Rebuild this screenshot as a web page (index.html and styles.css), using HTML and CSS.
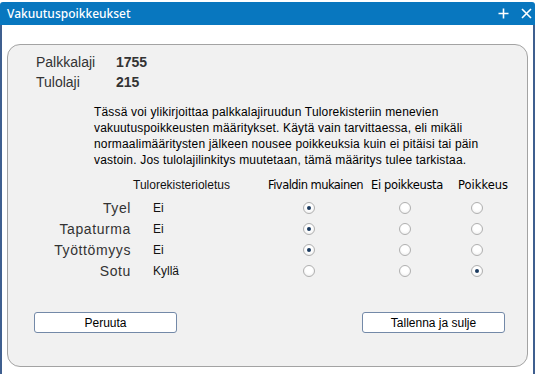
FILE: index.html
```html
<!DOCTYPE html>
<html lang="fi">
<head>
  <meta charset="UTF-8">
  <title>Vakuutuspoikkeukset</title>
  <link rel="stylesheet" href="styles.css">
</head>
<body>
  <div class="window">
    <div class="titlebar">
      <span class="title">Vakuutuspoikkeukset</span>
      <div class="title-buttons">
        <svg width="11" height="11" viewBox="0 0 11 11"><path d="M5.5 0.5v10M0.5 5.5h10" stroke="#fff" stroke-width="1.6" fill="none"/></svg>
        <svg width="11" height="11" viewBox="0 0 11 11"><path d="M1 1l9 9M10 1l-9 9" stroke="#fff" stroke-width="1.6" fill="none"/></svg>
      </div>
    </div>
    <div class="window-body">
      <div class="panel">
        <div class="info">
          <span class="info-label">Palkkalaji</span><span class="info-value">1755</span>
          <span class="info-label">Tulolaji</span><span class="info-value">215</span>
        </div>
        <p class="note">Tässä voi ylikirjoittaa palkkalajiruudun Tulorekisteriin menevien<br>vakuutuspoikkeusten määritykset. Käytä vain tarvittaessa, eli mikäli<br>normaalimääritysten jälkeen nousee poikkeuksia kuin ei pitäisi tai päin<br>vastoin. Jos tulolajilinkitys muutetaan, tämä määritys tulee tarkistaa.</p>
        <div class="exceptions">
          <span></span>
          <span class="head-default">Tulorekisterioletus</span>
          <span class="col-head c3">Fivaldin mukainen</span>
          <span class="col-head c4">Ei poikkeusta</span>
          <span class="col-head c5">Poikkeus</span>

          <span class="row-label">Tyel</span>
          <span class="row-value">Ei</span>
          <span class="cell c3"><input type="radio" name="tyel" checked></span>
          <span class="cell c4"><input type="radio" name="tyel"></span>
          <span class="cell c5"><input type="radio" name="tyel"></span>

          <span class="row-label">Tapaturma</span>
          <span class="row-value">Ei</span>
          <span class="cell c3"><input type="radio" name="tapaturma" checked></span>
          <span class="cell c4"><input type="radio" name="tapaturma"></span>
          <span class="cell c5"><input type="radio" name="tapaturma"></span>

          <span class="row-label">Työttömyys</span>
          <span class="row-value">Ei</span>
          <span class="cell c3"><input type="radio" name="tyottomyys" checked></span>
          <span class="cell c4"><input type="radio" name="tyottomyys"></span>
          <span class="cell c5"><input type="radio" name="tyottomyys"></span>

          <span class="row-label">Sotu</span>
          <span class="row-value">Kyllä</span>
          <span class="cell c3"><input type="radio" name="sotu"></span>
          <span class="cell c4"><input type="radio" name="sotu"></span>
          <span class="cell c5"><input type="radio" name="sotu" checked></span>
        </div>
        <div class="actions">
          <button class="btn">Peruuta</button>
          <button class="btn">Tallenna ja sulje</button>
        </div>
      </div>
    </div>
  </div>
</body>
</html>
```

FILE: styles.css
```css
* { margin: 0; padding: 0; box-sizing: border-box; }
body {
  background: #fff;
  width: 539px;
  height: 374px;
  overflow: hidden;
  font-family: "Liberation Sans", Arial, sans-serif;
}
/* Window frame */
.window {
  width: 535px;
  margin-top: 2px;
}
.titlebar {
  height: 23px;
  background: #0877bf;
  border-radius: 3px 3px 0 0;
  display: flex;
  align-items: center;
  justify-content: space-between;
  padding: 0 3px 0 7px;
}
.title {
  color: #fff;
  font-family: "Noto Sans", "Open Sans", sans-serif;
  font-size: 12px;
  font-weight: 500;
}
.title-buttons {
  display: flex;
  gap: 12px;
  align-items: center;
}
.window-body {
  height: 349px;
  background: #fff;
  border-left: 2px solid #3f5f8f;
  border-right: 2px solid #3f5f8f;
  padding: 19px 5px 7px 5px;
}
/* Rounded panel */
.panel {
  height: 323px;
  background: #f1f1f1;
  border: 1px solid #a3a3a3;
  border-radius: 13px;
  padding-top: 7px;
}
.info {
  display: grid;
  grid-template-columns: 80px auto;
  padding-left: 28px;
  color: #333;
  font-size: 14px;
  line-height: 20px;
}
.info-value { font-weight: bold; }
.note {
  margin: 12px 0 0 86px;
  font-size: 12px;
  line-height: 16px;
  letter-spacing: 0.17px;
  white-space: nowrap;
  color: #000;
}
/* Exception grid */
.exceptions {
  display: grid;
  grid-template-columns: 91px 131px 104px 86px 64px;
  grid-template-rows: 25px repeat(4, 21px);
  margin: 4px 0 0 32px;
  align-items: center;
}
.head-default {
  font-size: 12px;
  padding-left: 2px;
  color: #111;
}
.col-head {
  font-family: "DejaVu Sans", sans-serif;
  font-size: 11.5px;
  letter-spacing: -0.35px;
  color: #000;
  white-space: nowrap;
}
.col-head.c3 { padding-left: 6px; letter-spacing: -0.55px; }
.col-head.c4 { padding-left: 5px; }
.col-head.c5 { padding-left: 6px; letter-spacing: 0; }
.row-label {
  text-align: right;
  font-size: 14px;
  letter-spacing: 0.6px;
  color: #333;
}
.row-value {
  font-size: 12px;
  padding-left: 22px;
  color: #111;
}
.cell { display: flex; align-items: center; }
.cell.c3 { padding-left: 41px; }
.cell.c4 { padding-left: 33px; }
.cell.c5 { padding-left: 19px; }
input[type=radio] {
  appearance: none;
  width: 12px;
  height: 12px;
  border: 1px solid #b0b0b0;
  border-radius: 50%;
  background: radial-gradient(circle at 50% 40%, #ffffff 40%, #e9e9e9 100%);
  display: flex;
  align-items: center;
  justify-content: center;
}
input[type=radio]:checked::after {
  content: "";
  width: 4px;
  height: 4px;
  border-radius: 50%;
  background: #1b3a5f;
}
/* Buttons */
.actions {
  display: flex;
  justify-content: space-between;
  padding: 0 22px 0 26px;
  margin-top: 31px;
}
.btn {
  width: 143px;
  height: 21px;
  background: #fff;
  border: 1px solid #7389a8;
  border-radius: 3px;
  font-family: "Liberation Sans", Arial, sans-serif;
  font-size: 12px;
  color: #000;
}
```
